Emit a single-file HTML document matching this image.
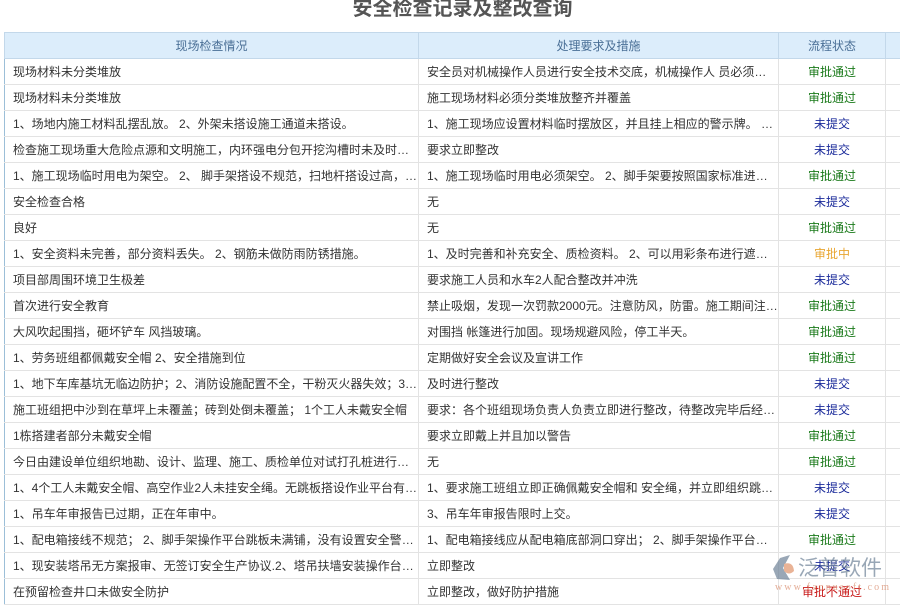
<!DOCTYPE html>
<html><head><meta charset="utf-8"><style>
body{margin:0;width:900px;height:600px;overflow:hidden;background:#fff;font-family:"Liberation Sans","Noto Sans CJK SC",sans-serif;position:relative}
.t{position:absolute;top:-4px;left:0;width:925px;text-align:center;font-size:20px;font-weight:bold;color:#555;line-height:26px}
table{position:absolute;left:4px;top:32px;border-collapse:collapse;table-layout:fixed;width:910px;font-size:12px;color:#333}
td,th{border:1px solid #e3e3e3;height:25px;padding:0 0 0 8px;white-space:nowrap;overflow:hidden;text-overflow:ellipsis}
th{background:#dcedfb;color:#4a6f96;font-weight:normal;border-color:#c3d8ea;text-align:center;padding:0}
tr td:first-child{border-left:1px solid #9cbfd8}
td.s{text-align:center;padding:0}
.g{color:#1a7a1a}.b{color:#1a2a9a}.o{color:#e8a530}.r{color:#c81818}
.wm{position:absolute;left:768px;top:550px;width:125px;height:48px;opacity:.7}
</style></head><body>
<div class="t">安全检查记录及整改查询</div>
<table>
<colgroup><col style="width:414px"><col style="width:360px"><col style="width:107px"><col style="width:29px"></colgroup>
<tr><th>现场检查情况</th><th>处理要求及措施</th><th>流程状态</th><th></th></tr>
<tr><td>现场材料未分类堆放</td><td>安全员对机械操作人员进行安全技术交底，机械操作人 员必须持证上岗</td><td class="s g">审批通过</td><td></td></tr>
<tr><td>现场材料未分类堆放</td><td>施工现场材料必须分类堆放整齐并覆盖</td><td class="s g">审批通过</td><td></td></tr>
<tr><td>1、场地内施工材料乱摆乱放。 2、外架未搭设施工通道未搭设。</td><td>1、施工现场应设置材料临时摆放区，并且挂上相应的警示牌。 2、外架</td><td class="s b">未提交</td><td></td></tr>
<tr><td>检查施工现场重大危险点源和文明施工，内环强电分包开挖沟槽时未及时回填</td><td>要求立即整改</td><td class="s b">未提交</td><td></td></tr>
<tr><td>1、施工现场临时用电为架空。 2、 脚手架搭设不规范，扫地杆搭设过高，缺少</td><td>1、施工现场临时用电必须架空。 2、脚手架要按照国家标准进行搭设</td><td class="s g">审批通过</td><td></td></tr>
<tr><td>安全检查合格</td><td>无</td><td class="s b">未提交</td><td></td></tr>
<tr><td>良好</td><td>无</td><td class="s g">审批通过</td><td></td></tr>
<tr><td>1、安全资料未完善，部分资料丢失。 2、钢筋未做防雨防锈措施。</td><td>1、及时完善和补充安全、质检资料。 2、可以用彩条布进行遮盖防雨</td><td class="s o">审批中</td><td></td></tr>
<tr><td>项目部周围环境卫生极差</td><td>要求施工人员和水车2人配合整改并冲洗</td><td class="s b">未提交</td><td></td></tr>
<tr><td>首次进行安全教育</td><td>禁止吸烟，发现一次罚款2000元。注意防风，防雷。施工期间注意安全</td><td class="s g">审批通过</td><td></td></tr>
<tr><td>大风吹起围挡，砸坏铲车 风挡玻璃。</td><td>对围挡 帐篷进行加固。现场规避风险，停工半天。</td><td class="s g">审批通过</td><td></td></tr>
<tr><td>1、劳务班组都佩戴安全帽 2、安全措施到位</td><td>定期做好安全会议及宣讲工作</td><td class="s g">审批通过</td><td></td></tr>
<tr><td>1、地下车库基坑无临边防护；2、消防设施配置不全，干粉灭火器失效；3、现场</td><td>及时进行整改</td><td class="s b">未提交</td><td></td></tr>
<tr><td>施工班组把中沙到在草坪上未覆盖；砖到处倒未覆盖； 1个工人未戴安全帽</td><td>要求：各个班组现场负责人负责立即进行整改，待整改完毕后经检查</td><td class="s b">未提交</td><td></td></tr>
<tr><td>1栋搭建者部分未戴安全帽</td><td>要求立即戴上并且加以警告</td><td class="s g">审批通过</td><td></td></tr>
<tr><td>今日由建设单位组织地勘、设计、监理、施工、质检单位对试打孔桩进行验收</td><td>无</td><td class="s g">审批通过</td><td></td></tr>
<tr><td>1、4个工人未戴安全帽、高空作业2人未挂安全绳。无跳板搭设作业平台有坠落</td><td>1、要求施工班组立即正确佩戴安全帽和 安全绳，并立即组织跳板搭设</td><td class="s b">未提交</td><td></td></tr>
<tr><td>1、吊车年审报告已过期，正在年审中。</td><td>3、吊车年审报告限时上交。</td><td class="s b">未提交</td><td></td></tr>
<tr><td>1、配电箱接线不规范； 2、脚手架操作平台跳板未满铺，没有设置安全警示标志</td><td>1、配电箱接线应从配电箱底部洞口穿出； 2、脚手架操作平台跳板满铺</td><td class="s g">审批通过</td><td></td></tr>
<tr><td>1、现安装塔吊无方案报审、无签订安全生产协议.2、塔吊扶墙安装操作台无防护</td><td>立即整改</td><td class="s b">未提交</td><td></td></tr>
<tr><td>在预留检查井口未做安全防护</td><td>立即整改，做好防护措施</td><td class="s r">审批不通过</td><td></td></tr>
</table>
<svg class="wm" viewBox="0 0 125 48">
<path d="M12 8 L22 5 L15 18 L22 30 L9 29 L5 19 Z" fill="#6f8398"/>
<path d="M16 14 Q25 11 26 21 Q21 26 16 21 Z" fill="#e0936a"/>
<text x="30" y="25" font-size="21" fill="#6f8398" font-family="Noto Sans CJK SC,sans-serif">泛普软件</text>
<text x="7" y="40" font-size="10" fill="#d88a6a" font-family="Liberation Serif,serif" textLength="114">www.fanpusoft.com</text>
</svg>
</body></html>
